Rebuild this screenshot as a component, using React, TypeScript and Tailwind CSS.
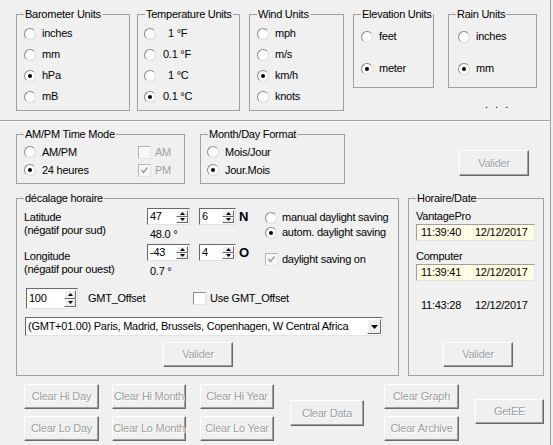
import type { ReactNode } from "react";
import clsx from "clsx";

const Group = ({ title, className, children }: { title: string; className?: string; children?: ReactNode }) => (
  <fieldset className={clsx("border border-[#a0a0a0] shrink-0", className)}>
    <legend className="ml-[7px] px-[1px] leading-[13px]">{title}</legend>
    {children}
  </fieldset>
);

const Radio = ({ label, checked, className }: { label: ReactNode; checked?: boolean; className?: string }) => (
  <div className={clsx("flex items-center", className)}>
    <span className="flex h-[12px] w-[12px] shrink-0 items-center justify-center rounded-full border border-[#8a8a8a] border-b-[#dcdcdc] border-r-[#dcdcdc] bg-white">
      {checked && <span className="h-[4px] w-[4px] rounded-full bg-black" />}
    </span>
    <span className="whitespace-pre">{label}</span>
  </div>
);

const Check = ({ checked, disabled }: { checked?: boolean; disabled?: boolean }) => (
  <span
    className={clsx(
      "flex h-[13px] w-[13px] shrink-0 items-center justify-center border border-b-[#e3e3e3] border-r-[#e3e3e3]",
      disabled ? "border-[#b5b5b5] bg-[#f7f7f7]" : "border-[#8a8a8a] bg-white"
    )}
  >
    {checked && (
      <svg width="9" height="9" viewBox="0 0 9 9">
        <polyline points="1.5,4 3.5,6.5 7.5,1.5" fill="none" stroke={disabled ? "#a0a0a0" : "#000"} strokeWidth="1.6" />
      </svg>
    )}
  </span>
);

const Btn = ({ children, className }: { children: ReactNode; className?: string }) => (
  <div
    className={clsx(
      "flex shrink-0 items-center justify-center whitespace-nowrap border border-l-white border-t-white border-b-[#696969] border-r-[#696969] bg-[#f0f0f0] text-[#a0a0a0] shadow-[inset_-1px_-1px_0_#a0a0a0] [text-shadow:1px_1px_0_#fff]",
      className
    )}
  >
    {children}
  </div>
);

const Arrow = ({ up }: { up?: boolean }) => (
  <svg width="5" height="3" viewBox="0 0 5 3">
    <polygon points={up ? "0,3 5,3 2.5,0" : "0,0 5,0 2.5,3"} fill="#000" />
  </svg>
);

const SpinBtn = ({ up }: { up?: boolean }) => (
  <div className="flex flex-1 items-center justify-center border border-l-white border-t-white border-b-[#696969] border-r-[#696969] bg-[#f0f0f0]">
    <Arrow up={up} />
  </div>
);

const Spin = ({ value, className }: { value: string; className?: string }) => (
  <div className={clsx("flex shrink-0 border border-l-[#696969] border-t-[#696969] border-b-[#e3e3e3] border-r-[#e3e3e3] bg-white", className)}>
    <span className="flex flex-1 items-center pl-[2px]">{value}</span>
    <div className="mr-[1px] flex w-[12px] flex-col py-[1px]">
      <SpinBtn up />
      <SpinBtn />
    </div>
  </div>
);

const ReadBox = ({ time, date }: { time: string; date: string }) => (
  <div className="mt-[1px] flex h-[17px] w-[119px] items-center border border-l-[#a0a0a0] border-t-[#a0a0a0] border-b-[#e3e3e3] border-r-[#e3e3e3] bg-[#ffffe1] pl-[4px]">
    <span className="w-[54px]">{time}</span>
    <span>{date}</span>
  </div>
);

export default function App() {
  return (
    <div className="h-[445px] w-[553px] overflow-hidden bg-[#f0f0f0] font-['Liberation_Sans',Arial,sans-serif] text-[11px] leading-[13px] tracking-[-0.25px] text-black">
      <div className="h-full w-[551px] border-r border-[#a0a0a0]">
        {/* units */}
        <div className="flex h-[120px] items-start pl-[16px] pt-[8px]">
          <Group title="Barometer Units" className="h-[103px] w-[114px]">
            <div className="pl-[7px] pt-[2px]">
              {["inches", "mm", "hPa", "mB"].map((l) => (
                <Radio key={l} label={l} checked={l === "hPa"} className="h-[21px] gap-[6px]" />
              ))}
            </div>
          </Group>
          <Group title="Temperature Units" className="ml-[7px] h-[103px] w-[103px]">
            <div className="pl-[6px] pt-[2px]">
              <Radio label={<span className="pl-[5px]">1 °F</span>} className="h-[21px] gap-[7px]" />
              <Radio label="0.1 °F" className="h-[21px] gap-[7px]" />
              <Radio label={<span className="pl-[5px]">1 °C</span>} className="h-[21px] gap-[7px]" />
              <Radio label="0.1 °C" checked className="h-[21px] gap-[7px]" />
            </div>
          </Group>
          <Group title="Wind Units" className="ml-[9px] h-[103px] w-[95px]">
            <div className="pl-[7px] pt-[2px]">
              {["mph", "m/s", "km/h", "knots"].map((l) => (
                <Radio key={l} label={l} checked={l === "km/h"} className="h-[21px] gap-[6px]" />
              ))}
            </div>
          </Group>
          <Group title="Elevation Units" className="ml-[9px] h-[80px] w-[81px]">
            <div className="flex flex-col gap-[11px] pl-[7px] pt-[5px]">
              <Radio label="feet" className="h-[21px] gap-[6px]" />
              <Radio label="meter" checked className="h-[21px] gap-[6px]" />
            </div>
          </Group>
          <div className="ml-[14px] flex flex-col">
            <Group title="Rain Units" className="h-[80px] w-[89px]">
              <div className="flex flex-col gap-[11px] pl-[9px] pt-[5px]">
                <Radio label="inches" className="h-[21px] gap-[6px]" />
                <Radio label="mm" checked className="h-[21px] gap-[6px]" />
              </div>
            </Group>
            <span className="ml-[37px] mt-[10px] tracking-[2px]">. . .</span>
          </div>
        </div>
        <div className="h-[2px] border-b border-t border-b-white border-t-[#a0a0a0]" />

        {/* time mode */}
        <div className="flex h-[62px] items-start pl-[16px] pt-[6px]">
          <Group title="AM/PM Time Mode" className="h-[56px] w-[169px]">
            <div className="grid grid-cols-[114px_auto] pl-[7px] pt-[2px]">
              <Radio label="AM/PM" className="h-[18px] gap-[6px]" />
              <div className="flex h-[18px] items-center gap-[4px] text-[#a0a0a0]">
                <Check disabled />
                <span>AM</span>
              </div>
              <Radio label="24 heures" checked className="h-[18px] gap-[6px]" />
              <div className="flex h-[18px] items-center gap-[4px] text-[#a0a0a0]">
                <Check disabled checked />
                <span>PM</span>
              </div>
            </div>
          </Group>
          <Group title="Month/Day Format" className="ml-[15px] h-[56px] w-[145px]">
            <div className="pl-[6px] pt-[2px]">
              <Radio label="Mois/Jour" className="h-[18px] gap-[6px]" />
              <Radio label="Jour.Mois" checked className="h-[18px] gap-[6px]" />
            </div>
          </Group>
          <Btn className="ml-[114px] mt-[22px] h-[26px] w-[70px]">Valider</Btn>
        </div>

        {/* offsets + clock */}
        <div className="mt-[8px] flex items-start pl-[16px]">
          <Group title="décalage horaire" className="h-[184px] w-[383px]">
            <div className="pl-[7px] pt-[1px]">
              <div className="flex h-[36px] items-start">
                <div className="w-[123px] pt-[5px]">
                  <div>Latitude</div>
                  <div>(négatif pour sud)</div>
                </div>
                <div className="w-[43px]">
                  <Spin value="47" className="mt-[2px] h-[17px] w-[43px]" />
                  <div className="mt-[3px] pl-[3px]">48.0 °</div>
                </div>
                <Spin value="6" className="ml-[9px] mt-[2px] h-[17px] w-[37px]" />
                <span className="ml-[3px] mt-[2px] flex h-[17px] w-[26px] items-center text-[13px] font-bold tracking-normal">N</span>
                <div className="pt-[4px]">
                  <Radio label="manual daylight saving" className="h-[15px] gap-[5px]" />
                  <Radio label="autom. daylight saving" checked className="h-[15px] gap-[5px]" />
                </div>
              </div>
              <div className="flex h-[46px] items-start">
                <div className="w-[123px] pt-[8px]">
                  <div>Longitude</div>
                  <div>(négatif pour ouest)</div>
                </div>
                <div className="w-[43px]">
                  <Spin value="-43" className="mt-[2px] h-[17px] w-[43px]" />
                  <div className="mt-[4px] pl-[3px]">0.7 °</div>
                </div>
                <Spin value="4" className="ml-[9px] mt-[2px] h-[17px] w-[37px]" />
                <span className="ml-[3px] mt-[2px] flex h-[17px] w-[26px] items-center text-[13px] font-bold tracking-normal">O</span>
                <div className="mt-[11px] flex h-[13px] items-center gap-[4px]">
                  <Check disabled checked />
                  <span>daylight saving on</span>
                </div>
              </div>
              <div className="flex h-[21px] items-center">
                <Spin value="100" className="ml-[2px] h-[21px] w-[52px]" />
                <span className="ml-[10px] w-[105px]">GMT_Offset</span>
                <Check />
                <span className="ml-[4px]">Use GMT_Offset</span>
              </div>
              <div className="ml-[1px] mt-[8px] flex h-[19px] w-[358px] border border-l-[#696969] border-t-[#696969] border-b-[#e3e3e3] border-r-[#e3e3e3] bg-white">
                <span className="flex flex-1 items-center pl-[2px]">(GMT+01.00) Paris, Madrid, Brussels, Copenhagen, W Central Africa</span>
                <div className="my-[1px] mr-[1px] flex w-[14px] items-center justify-center border border-l-white border-t-white border-b-[#696969] border-r-[#696969] bg-[#f0f0f0]">
                  <svg width="7" height="4" viewBox="0 0 7 4">
                    <polygon points="0,0 7,0 3.5,4" fill="#000" />
                  </svg>
                </div>
              </div>
              <Btn className="ml-[139px] mt-[6px] h-[25px] w-[70px]">Valider</Btn>
            </div>
          </Group>
          <Group title="Horaire/Date" className="ml-[9px] h-[184px] w-[136px]">
            <div className="pl-[7px] pt-[5px]">
              <div>VantagePro</div>
              <ReadBox time="11:39:40" date="12/12/2017" />
              <div className="mt-[9px]">Computer</div>
              <ReadBox time="11:39:41" date="12/12/2017" />
              <div className="mt-[18px] flex pl-[5px]">
                <span className="w-[54px]">11:43:28</span>
                <span>12/12/2017</span>
              </div>
              <Btn className="ml-[27px] mt-[30px] h-[25px] w-[70px]">Valider</Btn>
            </div>
          </Group>
        </div>

        {/* clear buttons */}
        <div className="mt-[8px] flex items-start pl-[24px]">
          <div className="flex w-[75px] flex-col gap-[7px]">
            <Btn className="h-[25px]">Clear Hi Day</Btn>
            <Btn className="h-[25px]">Clear Lo Day</Btn>
          </div>
          <div className="ml-[13px] flex w-[74px] flex-col gap-[7px]">
            <Btn className="h-[25px]">Clear Hi Month</Btn>
            <Btn className="h-[25px]">Clear Lo Month</Btn>
          </div>
          <div className="ml-[14px] flex w-[74px] flex-col gap-[7px]">
            <Btn className="h-[25px]">Clear Hi Year</Btn>
            <Btn className="h-[25px]">Clear Lo Year</Btn>
          </div>
          <Btn className="ml-[16px] mt-[16px] h-[26px] w-[74px]">Clear Data</Btn>
          <div className="ml-[20px] flex w-[75px] flex-col gap-[7px]">
            <Btn className="h-[25px]">Clear Graph</Btn>
            <Btn className="h-[25px]">Clear Archive</Btn>
          </div>
          <Btn className="ml-[16px] mt-[15px] h-[25px] w-[69px]">GetEE</Btn>
        </div>
      </div>
    </div>
  );
}
